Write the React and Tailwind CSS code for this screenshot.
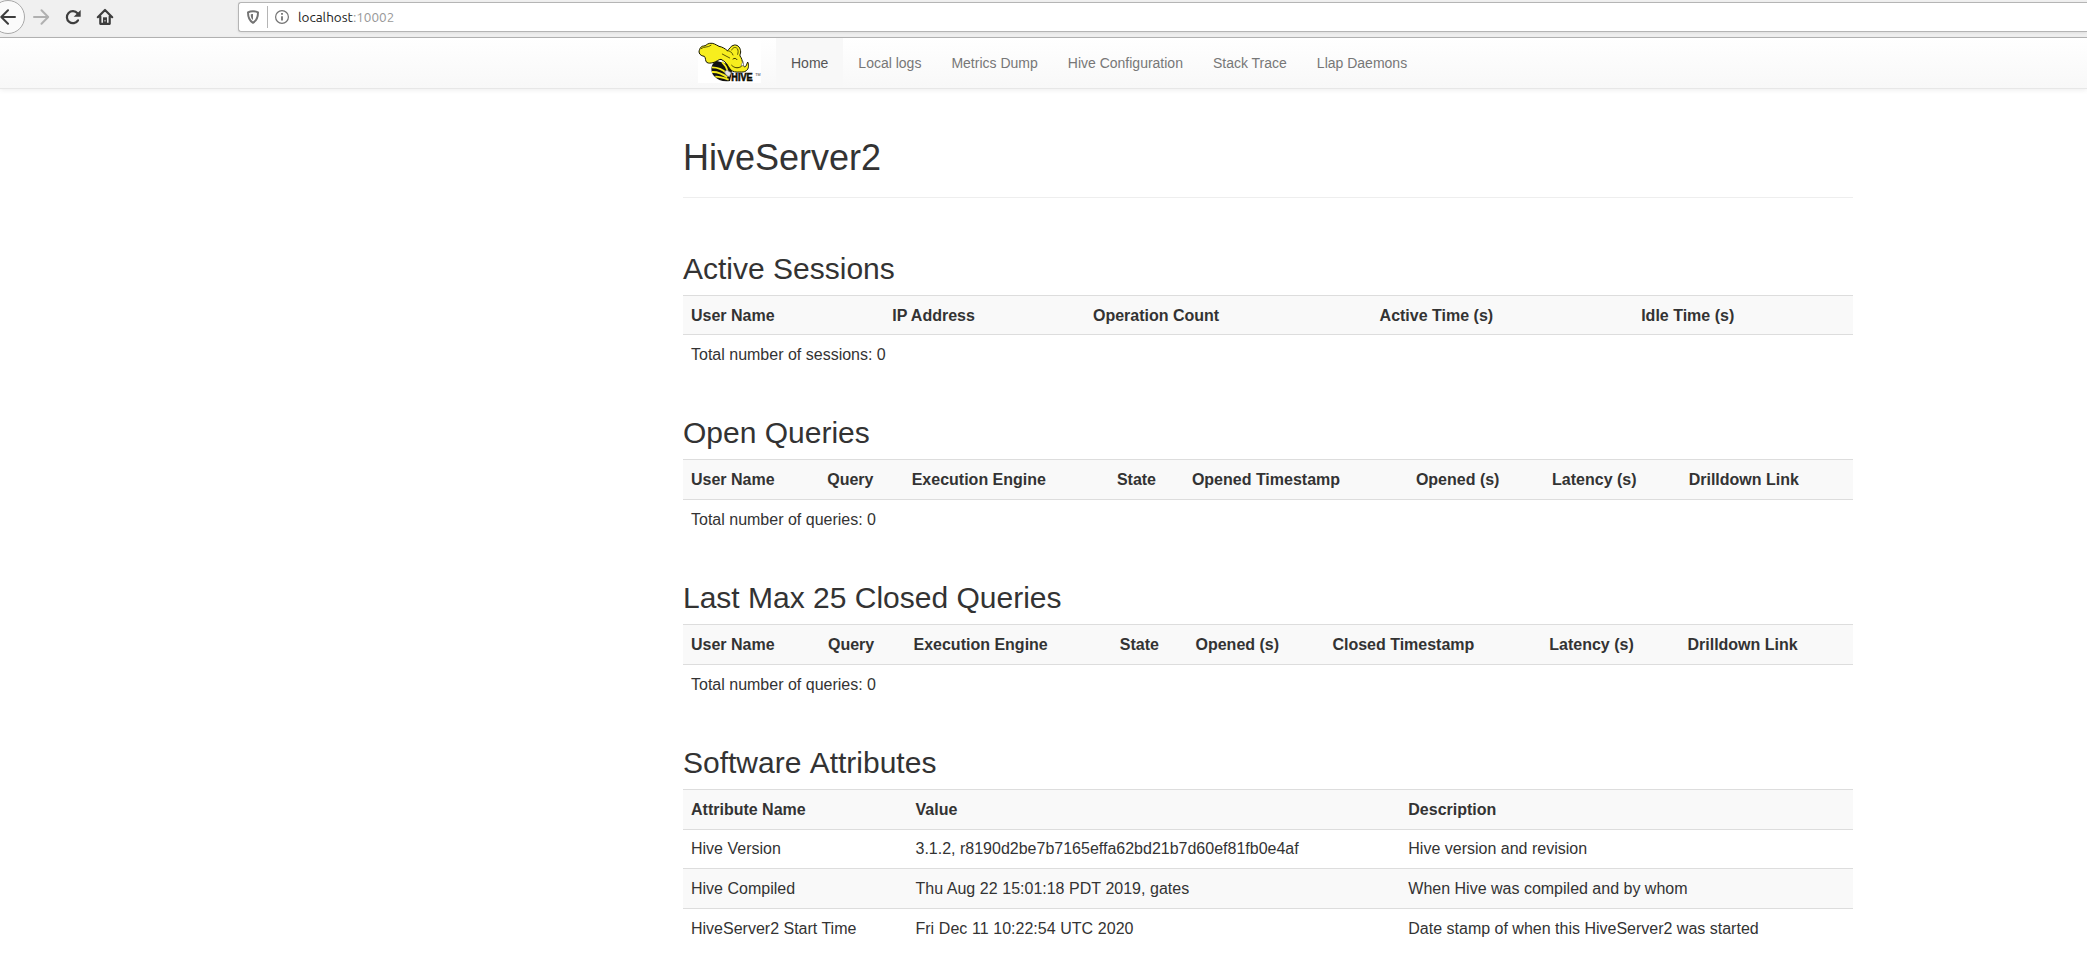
const cell = "px-2 border-t border-[#ddd] text-left align-top leading-[22.86px] whitespace-nowrap";

function ToolbarIcons() {
  return (
    <svg className="block h-[37px] w-[120px] shrink-0" viewBox="0 0 120 37" fill="none">
      <circle cx="8" cy="17" r="16.5" fill="#fbfbfb" stroke="#a9a9a9" />
      <path d="M15 17H1.5M8 10.3 1.3 17 8 23.7" stroke="#3e3e3e" strokeWidth="2" strokeLinecap="round" strokeLinejoin="round" />
      <path d="M34 17h13.5M41.5 10.3l6.7 6.7-6.7 6.7" stroke="#b0b0b0" strokeWidth="2" strokeLinecap="round" strokeLinejoin="round" />
      <path d="M78 20.300A6 6 0 1 1 77.500 13.300" stroke="#3e3e3e" strokeWidth="2.2" strokeLinecap="round" />
      <path d="M80.700 10v6.800h-7z" fill="#3e3e3e" />
      <path d="M97.800 17.200 105 10l7.200 7.200M100.300 16.500v7.300h9.400v-7.300" stroke="#3e3e3e" strokeWidth="2.2" strokeLinecap="round" strokeLinejoin="round" />
      <path d="M103 17.300h4v6.700h-4z" fill="#3e3e3e" />
      <path d="M105 20v1.500" stroke="#ddd" strokeWidth="1" />
    </svg>
  );
}

function AddressBar() {
  return (
    <div className="mt-[2px] ml-[118px] flex h-[30px] flex-1 items-center rounded-l-[3px] border border-r-0 border-[#b5b5b5] bg-white shadow-[0_1px_3px_rgba(0,0,0,0.08)]">
      <svg className="block h-7 w-[59px] shrink-0" viewBox="239 3 59 28" fill="none">
        <path d="M253 11.2c2 0 3.8.5 5 1.1 0 4.800-.8 8.200-5 10.500-4.200-2.300-5-5.700-5-10.500 1.200-.6 3-1.100 5-1.100z" stroke="#737373" strokeWidth="2" strokeLinejoin="round" />
        <path d="M253 14v6c-1.600-1.200-2.300-3-2.300-5.600.7-.3 1.500-.4 2.300-.4z" fill="#737373" />
        <path d="M267.500 6v22" stroke="#b5b5b5" />
        <circle cx="282" cy="17" r="6.400" stroke="#737373" strokeWidth="1.200" />
        <path d="M282 16.200v4.300M282 13v1.700" stroke="#737373" strokeWidth="1.800" />
      </svg>
      <div className="font-['Ubuntu','Noto_Sans',sans-serif] text-[13.5px] leading-7 text-[#999]">
        <span className="text-[#1c1c1c]">localhost</span>:10002
      </div>
    </div>
  );
}

function HiveLogo() {
  return (
    <svg className="block h-[45px] w-[63px]" viewBox="12 6 189 135" fill="none">
      <rect x="12" y="6" width="189" height="135" fill="#fff" />
      {/* striped abdomen */}
      <path d="M66 74C50 84 48 106 60 120c11 13 28 18 48 15l6-30-14-22z" fill="#111" />
      <path d="M54 94c14 0 32 6 44 18M54 108c15-1 32 6 46 16M64 122c13-1 26 4 40 9" stroke="#f6ec1c" strokeWidth="5.500" />
      <path d="M84 78c8 7 14 16 17 28" stroke="#f6ec1c" strokeWidth="5" />
      {/* wing */}
      <path d="M92 108c4-8 10-6 12-2l8 4-6 12c-8-2-12-6-14-14z" fill="#e4e4e4" stroke="#777" strokeWidth="2" />
      {/* elephant head, ear and trunk */}
      <g transform="translate(1 4)">
        <path
          d="M14 44c1-10 6-18 14-18 7 0 8-6 18-8 11-2 18 4 28 9 11 2 18 7 25 13 6-3 9-15 21-17 12-1 19 10 19 21 0 5-3 7-2 12 5 6 7 14 8 22 1 7 4 12 8 10 3-2 4-8 7-14 4 8 4 20-4 26-6 5-13 4-20 4-10 1-22 0-28-8-5-5-7-12-12-18-4-5-10-9-16-12-8 0-14 8-24 10-7 1-13 3-19-1-5-5-2-13-7-18-5-1-15-3-16-13z"
          fill="#f7ee1e" stroke="#151500" strokeWidth="3" strokeLinejoin="round"
        />
        <path d="M20 34c10-8 20-2 30-10M99 40c8 0 14 5 17 13M112 38c4-9 12-10 17-4 3 5 3 11 1 17M84 50c8 3 14 9 22 12" stroke="#3a3800" strokeWidth="2.500" strokeLinecap="round" />
        <path d="M116 65c4-3 9-3 12 2M112 84c8 8 17 9 26 5 5-2 8-7 8-12" stroke="#3a3800" strokeWidth="3" strokeLinecap="round" />
        <path d="M140 84l6-12 2 14z" fill="#fff" stroke="#555" strokeWidth="1.500" />
      </g>
      <text x="112" y="134" textLength="64" lengthAdjust="spacingAndGlyphs" fontFamily="Liberation Sans" fontWeight="700" fontSize="35" fill="#0c0c00" stroke="#0c0c00" strokeWidth="2">HIVE</text>
      <text x="184" y="119" textLength="16" lengthAdjust="spacingAndGlyphs" fontFamily="Liberation Sans" fontSize="12" fill="#333">TM</text>
    </svg>
  );
}

const links = ["Home", "Local logs", "Metrics Dump", "Hive Configuration", "Stack Trace", "Llap Daemons"];

function Navbar() {
  return (
    <nav className="flex h-[51px] border-b border-[#e7e7e7] bg-linear-to-b from-white to-[#f8f8f8] pl-[698px] shadow-[0_1px_5px_rgba(0,0,0,0.075)]">
      <div className="mr-[15px] h-[45px] w-[63px]">
        <HiveLogo />
      </div>
      <ul className="flex text-sm leading-5 text-[#777]">
        {links.map((l, i) => (
          <li key={l} className={i === 0 ? "bg-[#f8f8f8] px-[15px] pt-[15px] text-[#555]" : "px-[15px] pt-[15px]"}>{l}</li>
        ))}
      </ul>
    </nav>
  );
}

function Section({ title, height, cols, heads, rows, heights, spacing = "" }) {
  return (
    <section className={height}>
      <h2 className={`h-[43px] text-[30px] leading-[33px] ${spacing}`}>{title}</h2>
      <table className="w-[1170px] table-fixed border-separate border-spacing-0">
        <colgroup>{cols.map((w, i) => <col key={i} style={{ width: w }} />)}</colgroup>
        <thead>
          <tr className="bg-[#f9f9f9]">
            {heads.map((h) => <th key={h} className={`${cell} ${heights[0]} font-bold`}>{h}</th>)}
          </tr>
        </thead>
        <tbody>
          {rows.map((r, i) => (
            <tr key={i} className={i % 2 ? "bg-[#f9f9f9]" : ""}>
              {r.map((c) => (
                <td key={c} colSpan={r.length === 1 ? heads.length : 1} className={`${cell} ${heights[i + 1]}`}>{c}</td>
              ))}
            </tr>
          ))}
        </tbody>
      </table>
    </section>
  );
}

export default function App() {
  return (
    <div className="h-[970px] w-full overflow-hidden bg-white font-['Liberation_Sans',Arial,sans-serif] text-base text-[#333]">
      <header className="flex h-[38px] border-b border-[#b5b5b5] bg-[#f0f0f0]">
        <ToolbarIcons />
        <AddressBar />
      </header>
      <Navbar />
      <main className="ml-[683px] w-[1170px]">
        <h1 className="h-[109px] border-b border-[#eee] pt-[49px] text-[36px] leading-[40px]">HiveServer2</h1>
        <div className="pt-[54px]">
          <Section
            title="Active Sessions" height="h-[164px]"
            cols={[201.2, 200.8, 286.6, 261.6, 219.8]}
            heads={["User Name", "IP Address", "Operation Count", "Active Time (s)", "Idle Time (s)"]}
            rows={[["Total number of sessions: 0"]]}
            heights={["h-[39px] pt-[9px]", "h-[40px] pt-[9px]"]}
          />
          <Section
            title="Open Queries" height="h-[165px]"
            cols={[136.2, 84.5, 205.2, 75, 224, 136.2, 136.6, 172.3]}
            heads={["User Name", "Query", "Execution Engine", "State", "Opened Timestamp", "Opened (s)", "Latency (s)", "Drilldown Link"]}
            rows={[["Total number of queries: 0"]]}
            heights={["h-[40px] pt-[9px]", "h-[40px] pt-[9px]"]}
          />
          <Section
            title="Last Max 25 Closed Queries" height="h-[165px]"
            cols={[137, 85.5, 206.3, 75.7, 136.9, 216.9, 138.2, 173.5]}
            heads={["User Name", "Query", "Execution Engine", "State", "Opened (s)", "Closed Timestamp", "Latency (s)", "Drilldown Link"]}
            rows={[["Total number of queries: 0"]]}
            heights={["h-[40px] pt-[9px]", "h-[40px] pt-[9px]"]}
          />
          <Section
            title="Software Attributes" height="h-[165px]" spacing="[word-spacing:1.6px]"
            cols={[224.5, 492.8, 452.7]}
            heads={["Attribute Name", "Value", "Description"]}
            rows={[
              ["Hive Version", "3.1.2, r8190d2be7b7165effa62bd21b7d60ef81fb0e4af", "Hive version and revision"],
              ["Hive Compiled", "Thu Aug 22 15:01:18 PDT 2019, gates", "When Hive was compiled and by whom"],
              ["HiveServer2 Start Time", "Fri Dec 11 10:22:54 UTC 2020", "Date stamp of when this HiveServer2 was started"],
            ]}
            heights={["h-[40px] pt-[9px]", "h-[39px] pt-2", "h-[40px] pt-[9px] nth-2:[word-spacing:0.15px]", "h-[40px] pt-[9px] nth-2:[word-spacing:0.25px]"]}
          />
        </div>
      </main>
    </div>
  );
}
